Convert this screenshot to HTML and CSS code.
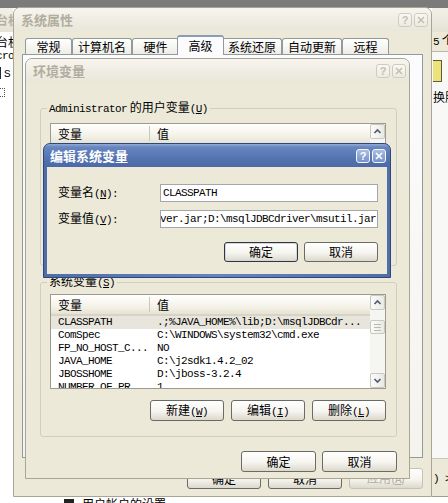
FILE: index.html
```html
<!DOCTYPE html>
<html lang="zh-CN">
<head>
  <meta charset="UTF-8">
  <title>编辑系统变量</title>
  <link rel="stylesheet" href="styles.css">
</head>
<body>
  <div class="desktop">

    <!-- windows behind the dialogs, only their edges show -->
    <div class="back-win back-left">
      <div class="back-title">台机</div>
      <div class="back-body">
        <div>台机</div>
        <div class="mono">cro</div>
        <div><span class="back-icon"></span><span class="mono">S</span></div>
        <div><span class="back-icon dotted"></span></div>
      </div>
    </div>

    <div class="back-win back-right">
      <div class="back-title"></div>
      <div class="back-head"><span class="mono">5</span> 个</div>
      <div class="back-body">
        <div class="back-yellow"></div>
        <div class="back-text">换肤</div>
      </div>
      <div class="back-foot"><span class="mono">) &gt;</span></div>
    </div>

    <div class="taskline"><span class="task-icon"></span>用户帐户的设置</div>

    <!-- 系统属性 -->
    <div class="win sysprop">
      <div class="titlebar inactive">
        <span class="title">系统属性</span>
        <span class="tbtn">?</span>
        <span class="tbtn"><svg width="8" height="8" viewBox="0 0 8 8"><path d="M1 1L7 7M7 1L1 7" stroke="currentColor" stroke-width="1.6"/></svg></span>
      </div>
      <div class="sys-body">
        <div class="tabs">
          <div class="tab">常规</div>
          <div class="tab">计算机名</div>
          <div class="tab">硬件</div>
          <div class="tab selected">高级</div>
          <div class="tab">系统还原</div>
          <div class="tab">自动更新</div>
          <div class="tab">远程</div>
        </div>
        <div class="tab-panel"></div>
        <div class="btn-row sys-buttons">
          <button class="btn">确定</button>
          <button class="btn">取消</button>
          <button class="btn" disabled>应用(<u class="mono">A</u>)</button>
        </div>
      </div>
    </div>

    <!-- 环境变量 -->
    <div class="win envvars">
      <div class="titlebar inactive">
        <span class="title">环境变量</span>
        <span class="tbtn">?</span>
        <span class="tbtn"><svg width="8" height="8" viewBox="0 0 8 8"><path d="M1 1L7 7M7 1L1 7" stroke="currentColor" stroke-width="1.6"/></svg></span>
      </div>
      <div class="env-body">
        <fieldset class="group user">
          <legend><span class="mono">Administrator</span> 的用户变量<span class="mono">(<u>U</u>)</span></legend>
          <div class="listview">
            <div class="lv-main">
              <div class="lv-head"><span class="col1">变量</span><span class="col2">值</span></div>
              <div class="lv-row"><span class="col1 mono">TEMP</span><span class="col2 mono">C:\Documents and Settings\Administrator\Local Settings\Temp</span></div>
              <div class="lv-row"><span class="col1 mono">TMP</span><span class="col2 mono">C:\Documents and Settings\Administrator\Local Settings\Temp</span></div>
            </div>
            <div class="scrollbar">
              <div class="sb-btn"><svg width="13" height="13" viewBox="0 0 13 13"><path d="M3.5 8L6.5 5L9.5 8" fill="none" stroke="#4d5a70" stroke-width="1.6"/></svg></div>
              <div class="sb-track"></div>
              <div class="sb-btn"><svg width="13" height="13" viewBox="0 0 13 13"><path d="M3.5 5L6.5 8L9.5 5" fill="none" stroke="#4d5a70" stroke-width="1.6"/></svg></div>
            </div>
          </div>
          <div class="btn-row">
            <button class="btn">新建<span class="mono">(<u>N</u>)</span></button>
            <button class="btn">编辑<span class="mono">(<u>E</u>)</span></button>
            <button class="btn">删除<span class="mono">(<u>D</u>)</span></button>
          </div>
        </fieldset>

        <fieldset class="group system">
          <legend>系统变量<span class="mono">(<u>S</u>)</span></legend>
          <div class="listview">
            <div class="lv-main">
              <div class="lv-head"><span class="col1">变量</span><span class="col2">值</span></div>
              <div class="lv-row sel"><span class="col1 mono">CLASSPATH</span><span class="col2 mono">.;%JAVA_HOME%\lib;D:\msqlJDBCdr...</span></div>
              <div class="lv-row"><span class="col1 mono">ComSpec</span><span class="col2 mono">C:\WINDOWS\system32\cmd.exe</span></div>
              <div class="lv-row"><span class="col1 mono">FP_NO_HOST_C...</span><span class="col2 mono">NO</span></div>
              <div class="lv-row"><span class="col1 mono">JAVA_HOME</span><span class="col2 mono">C:\j2sdk1.4.2_02</span></div>
              <div class="lv-row"><span class="col1 mono">JBOSSHOME</span><span class="col2 mono">D:\jboss-3.2.4</span></div>
              <div class="lv-row"><span class="col1 mono">NUMBER_OF_PR...</span><span class="col2 mono">1</span></div>
            </div>
            <div class="scrollbar">
              <div class="sb-btn"><svg width="13" height="13" viewBox="0 0 13 13"><path d="M3.5 8L6.5 5L9.5 8" fill="none" stroke="#4d5a70" stroke-width="1.6"/></svg></div>
              <div class="sb-track"><div class="sb-thumb"></div></div>
              <div class="sb-btn"><svg width="13" height="13" viewBox="0 0 13 13"><path d="M3.5 5L6.5 8L9.5 5" fill="none" stroke="#4d5a70" stroke-width="1.6"/></svg></div>
            </div>
          </div>
          <div class="btn-row">
            <button class="btn">新建<span class="mono">(<u>W</u>)</span></button>
            <button class="btn">编辑<span class="mono">(<u>I</u>)</span></button>
            <button class="btn">删除<span class="mono">(<u>L</u>)</span></button>
          </div>
        </fieldset>

        <div class="btn-row env-buttons">
          <button class="btn">确定</button>
          <button class="btn">取消</button>
        </div>
      </div>
    </div>

    <!-- 编辑系统变量 -->
    <div class="win editvar">
      <div class="titlebar active">
        <span class="title">编辑系统变量</span>
        <span class="tbtn">?</span>
        <span class="tbtn"><svg width="8" height="8" viewBox="0 0 8 8"><path d="M1 1L7 7M7 1L1 7" stroke="currentColor" stroke-width="1.6"/></svg></span>
      </div>
      <div class="edit-body">
        <div class="form-row">
          <label class="form-label">变量名<span class="mono">(<u>N</u>):</span></label>
          <div class="field"><span class="mono">CLASSPATH</span></div>
        </div>
        <div class="form-row">
          <label class="form-label">变量值<span class="mono">(<u>V</u>):</span></label>
          <div class="field scrolled"><span class="mono">D:\msqlJDBCdriver\msbase.jar;D:\msqlJDBCdriver\mssqlserver.jar;D:\msqlJDBCdriver\msutil.jar</span></div>
        </div>
        <div class="btn-row edit-buttons">
          <button class="btn default">确定</button>
          <button class="btn">取消</button>
        </div>
      </div>
    </div>

  </div>
</body>
</html>
```

FILE: styles.css
```css
* {
  box-sizing: border-box;
}
body {
  margin: 0;
  font-family: "Noto Sans CJK SC", "Liberation Sans", sans-serif;
  font-size: 12px;
  line-height: 14px;
  color: #000;
  background: #fff;
}
.desktop {
  position: relative;
  width: 448px;
  height: 503px;
  overflow: hidden;
  background: linear-gradient(#7b7b7b 0, #7b7b7b 8px, #fff 8px);
}
.mono {
  font-family: "Liberation Mono", monospace;
  font-size: 11px;
  letter-spacing: -0.6px;
}

/* windows in the back */
.back-win {
  position: absolute;
  top: 8px;
  height: 489px;
  overflow: hidden;
  white-space: nowrap;
  background: #fff;
}
.back-left {
  left: -4px;
  width: 17px;
}
.back-right {
  left: 432px;
  width: 20px;
  display: flex;
  flex-direction: column;
  background: #f8f8f6;
}
.back-title {
  height: 24px;
  padding-top: 5px;
  background: linear-gradient(#f2f0e8, #e5e2d5);
  color: #b4b0a2;
  font-weight: bold;
}
.back-left .back-body {
  padding-top: 2px;
  line-height: 15px;
}
.back-icon {
  display: inline-block;
  width: 5px;
  height: 12px;
  margin-right: 3px;
  vertical-align: -2px;
  background: #1d2b4a;
}
.back-icon.dotted {
  width: 9px;
  height: 9px;
  background: none;
  border: 1px dotted #555;
}
.back-head {
  height: 20px;
  padding: 1px 0 0 1px;
  background: #ece9d8;
  border-bottom: 1px solid #b9b6a8;
}
.back-right .back-body {
  flex: 1;
  padding-left: 1px;
}
.back-yellow {
  width: 9px;
  height: 22px;
  margin-top: 8px;
  background: #ebe37a;
  border: 1px solid #5f5b34;
  border-left: none;
}
.back-text {
  margin-top: 8px;
}
.back-foot {
  height: 39px;
  padding: 11px 0 0 1px;
  background: #ece9d8;
  border-top: 1px solid #c9c6ba;
  border-bottom: 1px solid #9f9c90;
}
.taskline {
  position: absolute;
  left: 64px;
  top: 497px;
  white-space: nowrap;
  font-size: 12px;
}
.task-icon {
  display: inline-block;
  width: 10px;
  height: 10px;
  margin-right: 8px;
  background: #222;
}

/* window frame */
.win {
  position: absolute;
  display: flex;
  flex-direction: column;
  background: #ece9d8;
  border: 1px solid #a8a597;
  border-radius: 7px 7px 0 0;
  overflow: hidden;
}
.titlebar {
  flex: none;
  height: 23px;
  display: flex;
  align-items: center;
  gap: 2px;
  padding: 0 3px 0 7px;
}
.titlebar .title {
  flex: 1;
  font-size: 13px;
  font-weight: bold;
  white-space: nowrap;
}
.titlebar.inactive {
  background: linear-gradient(#f7f5ee, #e9e6da);
  color: #b1ad9f;
}
.titlebar.active {
  background: linear-gradient(#93acd8 0, #6886c0 3px, #5676b2 55%, #4a69a6);
  color: #fff;
  padding-left: 6px;
  padding-right: 4px;
}
.tbtn {
  width: 14px;
  height: 14px;
  border-radius: 3px;
  display: flex;
  align-items: center;
  justify-content: center;
  font: bold 11px "Liberation Sans", sans-serif;
}
.inactive .tbtn {
  border: 1px solid #cfccbf;
  background: linear-gradient(#f9f8f4, #eceae1);
  color: #c4c0b2;
}
.active .tbtn {
  border: 1px solid #f4f6fb;
  background: linear-gradient(#a9bde2, #7692c8);
  color: #fff;
}

/* buttons */
.btn {
  width: 74px;
  height: 21px;
  padding: 0;
  font-family: inherit;
  font-size: 12px;
  line-height: 14px;
  color: #000;
  border: 1px solid #6b6b66;
  border-radius: 3px;
  background: linear-gradient(#fff, #f5f4ef 55%, #dcd8cc);
  white-space: nowrap;
}
.btn.default {
  border-color: #353535;
  box-shadow: inset 0 0 0 1px #cdd6e8;
}
.btn:disabled {
  color: #b0ac9e;
  border-color: #c6c3b6;
}
.btn-row {
  display: flex;
  justify-content: flex-end;
  gap: 7px;
  margin-top: 11px;
}

/* 系统属性 */
.sysprop {
  left: 13px;
  top: 7px;
  width: 419px;
  height: 490px;
}
.sys-body {
  flex: 1;
  display: flex;
  flex-direction: column;
  padding: 4px 8px 7px;
}
.tabs {
  position: relative;
  z-index: 1;
  height: 19px;
  display: flex;
  align-items: flex-end;
  padding-left: 3px;
}
.tab {
  height: 16px;
  min-width: 47px;
  padding: 0 5px;
  text-align: center;
  line-height: 15px;
  white-space: nowrap;
  border: 1px solid #919b9c;
  border-bottom: none;
  border-radius: 3px 3px 0 0;
  background: linear-gradient(#fff, #eeede7);
}
.tab.selected {
  position: relative;
  z-index: 1;
  height: 20px;
  margin: 0 -2px -1px;
  padding: 0 7px;
  line-height: 17px;
  background: #fcfcfe;
  border-top: 2px solid #8b9cb6;
}
.tab-panel {
  flex: 1;
  border: 1px solid #919b9c;
  background: linear-gradient(#fcfcfe, #f4f3ee);
}
.sys-buttons {
  margin-top: 10px;
}

/* 环境变量 */
.envvars {
  left: 25px;
  top: 58px;
  width: 385px;
  height: 421px;
}
.env-body {
  flex: 1;
  display: flex;
  flex-direction: column;
  padding: 18px 12px 10px 14px;
}
.group {
  margin: 0;
  min-width: 0;
  padding: 0 10px 15px 6px;
  border: 1px solid #d0d0bf;
  border-radius: 3px;
}
.group legend {
  padding: 0 2px;
  line-height: 14px;
  white-space: nowrap;
}
.group + .group {
  margin-top: 8px;
}
.env-buttons {
  gap: 6px;
  margin-top: 14px;
}
.env-buttons .btn {
  width: 75px;
}

/* list view */
.listview {
  height: 95px;
  margin: 4px 0 0 3px;
  display: flex;
  border: 1px solid #9c9a8f;
  background: #fff;
}
.group.user .listview {
  margin-top: 7px;
}
.lv-main {
  flex: 1;
  min-width: 0;
  overflow: hidden;
}
.lv-head {
  height: 21px;
  display: flex;
  align-items: center;
  background: linear-gradient(#fff, #f3f1e6 65%, #e6e3d4);
  border-bottom: 2px solid #d8d4c4;
}
.col1 {
  flex: none;
  width: 99px;
  padding-left: 7px;
  overflow: hidden;
  white-space: nowrap;
}
.col2 {
  flex: 1;
  padding-left: 7px;
  overflow: hidden;
  white-space: nowrap;
}
.lv-head .col1 {
  height: 15px;
  line-height: 15px;
  border-right: 1px solid #cbc8b6;
}
.lv-row {
  display: flex;
  height: 13px;
  line-height: 13px;
}
.lv-row.sel {
  background: #e7e5dc;
}
.scrollbar {
  flex: none;
  width: 15px;
  display: flex;
  flex-direction: column;
  background: #f5f5f1;
}
.sb-btn {
  height: 15px;
  display: flex;
  align-items: center;
  justify-content: center;
  border: 1px solid #c9c9c2;
  border-radius: 2px;
  background: linear-gradient(90deg, #fbfbfa, #e9e9e4);
}
.sb-track {
  flex: 1;
}
.sb-thumb {
  height: 14px;
  margin-top: 10px;
  border: 1px solid #c9c9c2;
  border-radius: 2px;
  background:
    linear-gradient(#b8b8b0, #b8b8b0) center 3px / 7px 1px no-repeat,
    linear-gradient(#b8b8b0, #b8b8b0) center 6px / 7px 1px no-repeat,
    linear-gradient(#b8b8b0, #b8b8b0) center 9px / 7px 1px no-repeat,
    linear-gradient(90deg, #fbfbfa, #e9e9e4);
}

/* 编辑系统变量 */
.editvar {
  left: 43px;
  top: 143px;
  width: 348px;
  height: 135px;
  border-color: #2c4779;
  background: linear-gradient(90deg, #4f6ea9, #6583bc 50%, #4f6ea9);
}
.edit-body {
  flex: 1;
  margin: 0 3px 3px;
  padding: 17px 9px 0 11px;
  background: #ece9d8;
}
.form-row {
  display: flex;
  align-items: center;
  height: 18px;
}
.form-row + .form-row {
  margin-top: 8px;
}
.form-label {
  flex: none;
  width: 102px;
  white-space: nowrap;
}
.field {
  flex: 1;
  min-width: 0;
  height: 18px;
  display: flex;
  align-items: center;
  padding: 0 1px 0 2px;
  overflow: hidden;
  white-space: nowrap;
  background: #fff;
  border: 1px solid #a3a7ab;
}
.field.scrolled {
  justify-content: flex-end;
}
.edit-buttons {
  gap: 6px;
  margin-top: 14px;
}
.edit-buttons .btn {
  height: 20px;
}
```
